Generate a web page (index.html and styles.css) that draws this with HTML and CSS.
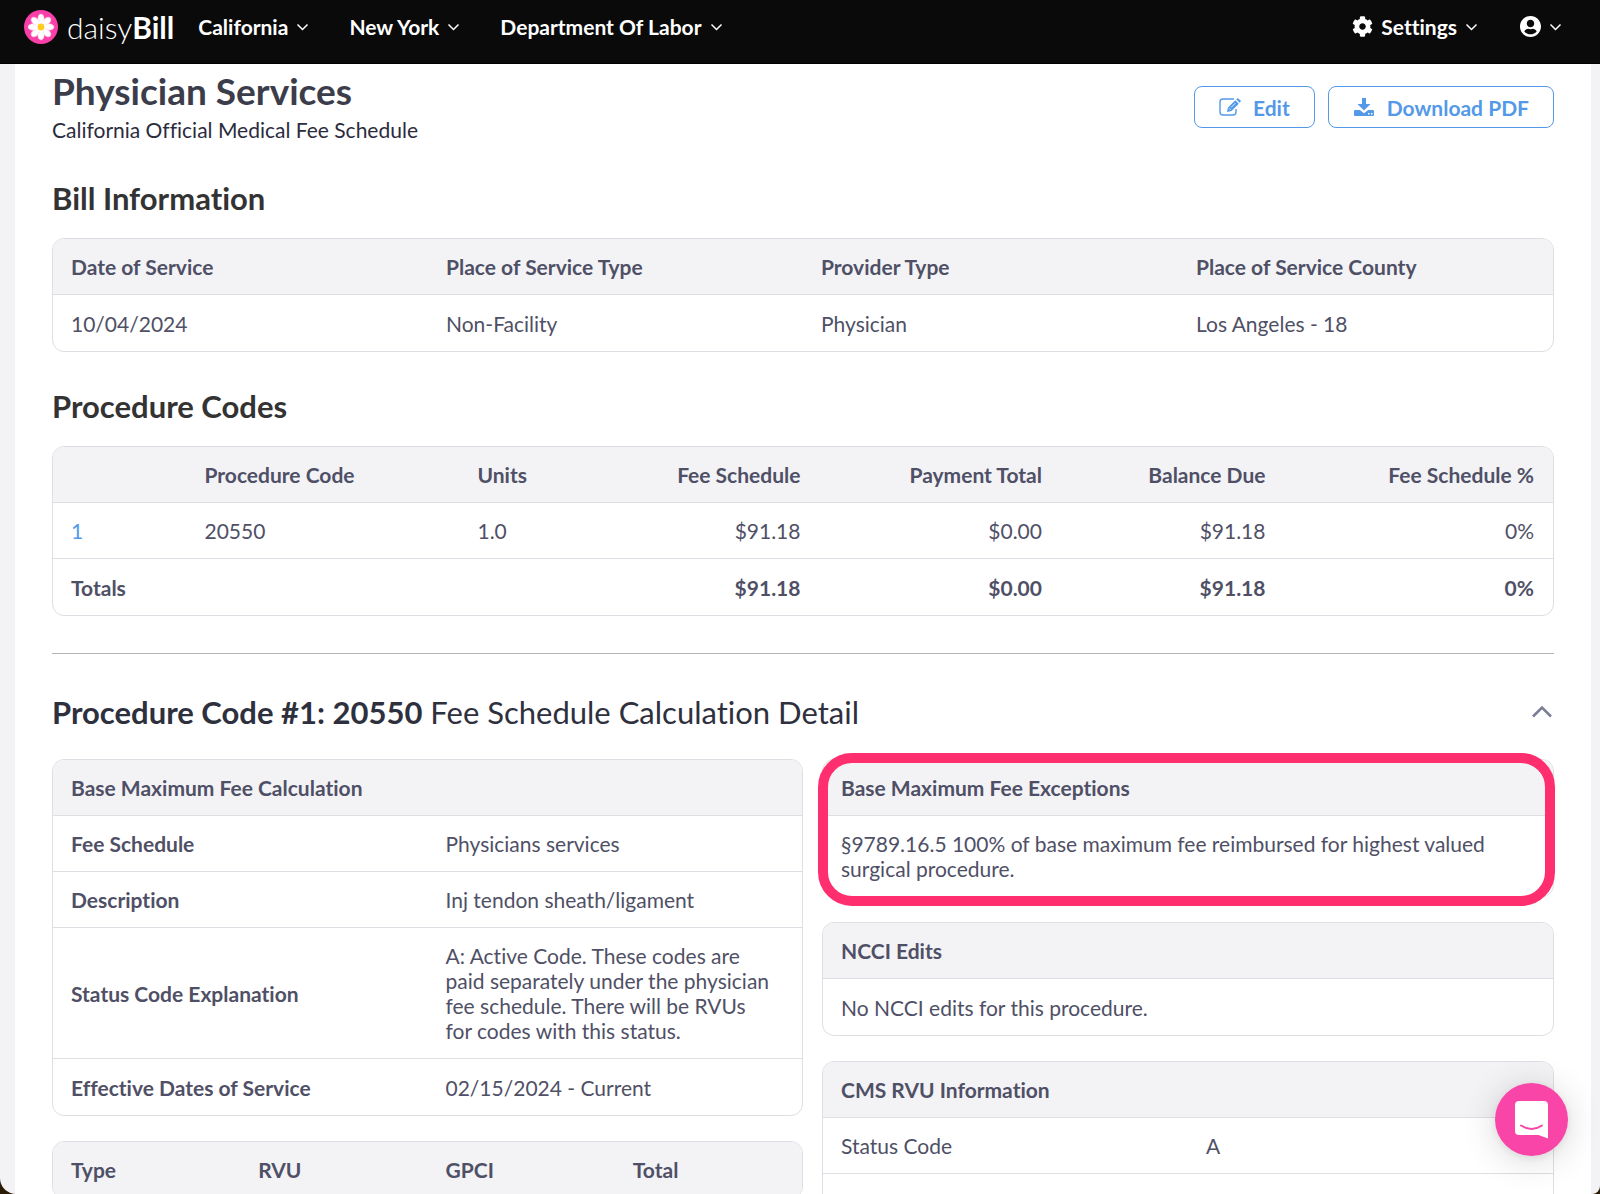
FILE: index.html
```html
<!DOCTYPE html>
<html lang="en">
<head>
    <meta charset="UTF-8">
    <meta name="viewport" content="width=device-width, initial-scale=1.0">
    <title>Physician Services - daisyBill</title>
    <link rel="stylesheet" href="styles.css">
</head>
<body>
    <div class="app">
        <header class="navbar">
            <a class="brand" href="#">
                <svg class="brand-logo" viewBox="0 0 34 34" aria-hidden="true">
                    <circle cx="17" cy="17" r="17" fill="#fb3fa8"/>
                    <g fill="#fff" stroke="#fbc4e2" stroke-width=".5">
                        <ellipse cx="17" cy="9" rx="3.200" ry="5"/>
                        <ellipse cx="17" cy="9" rx="3.200" ry="5" transform="rotate(45 17 17)"/>
                        <ellipse cx="17" cy="9" rx="3.200" ry="5" transform="rotate(90 17 17)"/>
                        <ellipse cx="17" cy="9" rx="3.200" ry="5" transform="rotate(135 17 17)"/>
                        <ellipse cx="17" cy="9" rx="3.200" ry="5" transform="rotate(180 17 17)"/>
                        <ellipse cx="17" cy="9" rx="3.200" ry="5" transform="rotate(225 17 17)"/>
                        <ellipse cx="17" cy="9" rx="3.200" ry="5" transform="rotate(270 17 17)"/>
                        <ellipse cx="17" cy="9" rx="3.200" ry="5" transform="rotate(315 17 17)"/>
                    </g>
                    <circle cx="17" cy="17" r="5" fill="#fff"/>
                    <circle cx="17" cy="17" r="3.400" fill="#ffcb1f"/>
                </svg>
                <span class="brand-name">daisy<b>Bill</b></span>
            </a>
            <nav class="nav-links">
                <button class="nav-item">California <svg class="chevron" viewBox="0 0 12 8"><path d="M1 1.5l5 5 5-5"/></svg></button>
                <button class="nav-item">New York <svg class="chevron" viewBox="0 0 12 8"><path d="M1 1.5l5 5 5-5"/></svg></button>
                <button class="nav-item">Department Of Labor <svg class="chevron" viewBox="0 0 12 8"><path d="M1 1.5l5 5 5-5"/></svg></button>
            </nav>
            <div class="nav-links nav-right">
                <button class="nav-item">
                    <svg class="nav-icon" viewBox="0 0 512 512" fill="#fff" aria-hidden="true"><path d="M487.4 315.7l-42.600-24.600c4.300-23.200 4.300-47 0-70.200l42.600-24.600c4.900-2.800 7.100-8.600 5.500-14-11.100-35.600-30-67.800-54.700-94.600-3.800-4.100-10-5.100-14.800-2.300L380.800 110c-17.900-15.400-38.500-27.300-60.800-35.100V25.800c0-5.600-3.900-10.500-9.400-11.700-36.700-8.200-74.300-7.800-109.200 0-5.500 1.200-9.400 6.100-9.400 11.700V75c-22.200 7.900-42.800 19.800-60.800 35.100L88.700 85.500c-4.900-2.800-11-1.900-14.800 2.300-24.700 26.700-43.600 58.900-54.700 94.600-1.700 5.400.6 11.200 5.500 14L67.300 221c-4.300 23.200-4.300 47 0 70.200l-42.600 24.600c-4.900 2.800-7.100 8.600-5.500 14 11.100 35.600 30 67.800 54.700 94.600 3.800 4.100 10 5.100 14.800 2.300l42.600-24.600c17.900 15.400 38.500 27.300 60.800 35.100v49.200c0 5.600 3.900 10.500 9.400 11.700 36.700 8.200 74.300 7.800 109.200 0 5.500-1.200 9.400-6.100 9.400-11.700v-49.200c22.200-7.900 42.800-19.800 60.800-35.100l42.600 24.600c4.900 2.800 11 1.900 14.800-2.300 24.700-26.700 43.600-58.900 54.700-94.600 1.500-5.500-.7-11.300-5.600-14.100zM256 336c-44.100 0-80-35.900-80-80s35.900-80 80-80 80 35.900 80 80-35.900 80-80 80z"/></svg>
                    Settings <svg class="chevron" viewBox="0 0 12 8"><path d="M1 1.5l5 5 5-5"/></svg>
                </button>
                <button class="nav-item" aria-label="Account">
                    <svg class="nav-icon" viewBox="0 0 496 496" fill="#fff"><path d="M248 0C111 0 0 111 0 248s111 248 248 248 248-111 248-248S385 0 248 0zm0 88c49 0 88 39 88 88s-39 88-88 88-88-39-88-88 39-88 88-88zm0 344c-59 0-111-26-146-68 19-35 56-60 98-60 10 0 24 8 48 8s38-8 48-8c42 0 79 25 98 60-35 42-87 68-146 68z"/></svg>
                    <svg class="chevron" viewBox="0 0 12 8"><path d="M1 1.5l5 5 5-5"/></svg>
                </button>
            </div>
        </header>

        <main class="page">
            <div class="page-header">
                <div>
                    <h1>Physician Services</h1>
                    <p class="subtitle">California Official Medical Fee Schedule</p>
                </div>
                <div class="actions">
                    <button class="btn">
                        <svg class="btn-icon" viewBox="0 0 22 18" aria-hidden="true">
                            <path d="M15 1H4Q1 1 1 4v10q0 3 3 3h10q3 0 3-3v-3" fill="none" stroke="currentColor" stroke-width="1.400"/>
                            <path d="M8 14l1-4.500 7.300-7.300 3.500 3.500L12.500 13zM17.200 1.300l.9-.9q.6-.5 1.200 0l2.200 2.200q.6.600 0 1.200l-.9.900z" fill="currentColor"/>
                            <path d="M10.200 10.400l1.500 1.500M12 9.500l4.300-4.300" stroke="#fff" stroke-width=".8"/>
                        </svg>
                        Edit
                    </button>
                    <button class="btn">
                        <svg class="btn-icon" viewBox="0 0 22 18" aria-hidden="true">
                            <path d="M9 0h4v6h4.500L11 12.500 4.500 6H9z" fill="currentColor"/>
                            <path fill-rule="evenodd" d="M2 12h4.800l4.200 3.200 4.200-3.200H20q1 0 1 1v4q0 1-1 1H2q-1 0-1-1v-4q0-1 1-1zM15 15v1.500h1.500V15zM18 15v1.500h1.500V15z" fill="currentColor"/>
                        </svg>
                        Download PDF
                    </button>
                </div>
            </div>

            <h2>Bill Information</h2>
            <div class="card">
                <table class="even-columns">
                    <thead>
                        <tr>
                            <th>Date of Service</th>
                            <th>Place of Service Type</th>
                            <th>Provider Type</th>
                            <th>Place of Service County</th>
                        </tr>
                    </thead>
                    <tbody>
                        <tr>
                            <td>10/04/2024</td>
                            <td>Non-Facility</td>
                            <td>Physician</td>
                            <td>Los Angeles - 18</td>
                        </tr>
                    </tbody>
                </table>
            </div>

            <h2>Procedure Codes</h2>
            <div class="card">
                <table class="codes-table">
                    <thead>
                        <tr>
                            <th class="col-line"></th>
                            <th class="col-code">Procedure Code</th>
                            <th class="col-units">Units</th>
                            <th class="col-fee num">Fee Schedule</th>
                            <th class="col-payment num">Payment Total</th>
                            <th class="col-balance num">Balance Due</th>
                            <th class="num">Fee Schedule %</th>
                        </tr>
                    </thead>
                    <tbody>
                        <tr>
                            <td><a href="#procedure-1">1</a></td>
                            <td>20550</td>
                            <td>1.0</td>
                            <td class="num">$91.18</td>
                            <td class="num">$0.00</td>
                            <td class="num">$91.18</td>
                            <td class="num">0%</td>
                        </tr>
                        <tr class="totals">
                            <td>Totals</td>
                            <td></td>
                            <td></td>
                            <td class="num">$91.18</td>
                            <td class="num">$0.00</td>
                            <td class="num">$91.18</td>
                            <td class="num">0%</td>
                        </tr>
                    </tbody>
                </table>
            </div>

            <hr>

            <div class="detail-header" id="procedure-1">
                <h2><strong>Procedure Code #1: 20550</strong> Fee Schedule Calculation Detail</h2>
                <button class="collapse" aria-label="Collapse">
                    <svg viewBox="0 0 20 12"><path d="M1 10.500L10 1.500l9 9"/></svg>
                </button>
            </div>

            <div class="detail-columns">
                <div class="column">
                    <div class="card">
                        <table class="even-columns fee-table">
                            <thead>
                                <tr><th colspan="2">Base Maximum Fee Calculation</th></tr>
                            </thead>
                            <tbody>
                                <tr>
                                    <th>Fee Schedule</th>
                                    <td>Physicians services</td>
                                </tr>
                                <tr>
                                    <th>Description</th>
                                    <td>Inj tendon sheath/ligament</td>
                                </tr>
                                <tr>
                                    <th>Status Code Explanation</th>
                                    <td>A: Active Code. These codes are paid separately under the physician fee schedule. There will be RVUs for codes with this status.</td>
                                </tr>
                                <tr>
                                    <th>Effective Dates of Service</th>
                                    <td>02/15/2024 - Current</td>
                                </tr>
                            </tbody>
                        </table>
                    </div>
                    <div class="card">
                        <table class="even-columns">
                            <thead>
                                <tr>
                                    <th>Type</th>
                                    <th>RVU</th>
                                    <th>GPCI</th>
                                    <th>Total</th>
                                </tr>
                            </thead>
                        </table>
                    </div>
                </div>

                <div class="column column-right">
                    <div class="highlight">
                        <div class="card">
                            <table>
                                <thead>
                                    <tr><th>Base Maximum Fee Exceptions</th></tr>
                                </thead>
                                <tbody>
                                    <tr><td>§9789.16.5 100% of base maximum fee reimbursed for highest valued surgical procedure.</td></tr>
                                </tbody>
                            </table>
                        </div>
                    </div>
                    <div class="card">
                        <table>
                            <thead>
                                <tr><th>NCCI Edits</th></tr>
                            </thead>
                            <tbody>
                                <tr><td>No NCCI edits for this procedure.</td></tr>
                            </tbody>
                        </table>
                    </div>
                    <div class="card">
                        <table class="even-columns">
                            <thead>
                                <tr><th colspan="2">CMS RVU Information</th></tr>
                            </thead>
                            <tbody>
                                <tr>
                                    <td>Status Code</td>
                                    <td>A</td>
                                </tr>
                                <tr>
                                    <td></td>
                                    <td></td>
                                </tr>
                            </tbody>
                        </table>
                    </div>
                </div>
            </div>
        </main>

        <button class="chat" aria-label="Open chat">
            <svg viewBox="0 0 33 38">
                <path d="M4 0h25q4 0 4 4v33.500l-9.500-3.500H4q-4 0-4-4V4q0-4 4-4z" fill="#fff"/>
                <path d="M6 24.500q10.500 7 21 0" fill="none" stroke="#f945a7" stroke-width="2" stroke-linecap="round"/>
            </svg>
        </button>
    </div>
</body>
</html>
```
FILE: styles.css
```css
* {
    box-sizing: border-box;
}

html {
    background: #2b1c07;
}

body {
    margin: 0;
    font-family: Lato, "Open Sans", sans-serif;
    font-size: 21px;
    line-height: 25px;
    font-variant-ligatures: no-common-ligatures;
    color: #4f5066;
}

.app {
    height: 100vh;
    overflow: hidden;
    background: #f3f3f6;
    border-radius: 0 0 8px 16px;
}

/* Top bar */
.navbar {
    display: flex;
    align-items: flex-start;
    height: 64px;
    padding: 10px 38px 0 24px;
    background: #0a0a0a;
    border-bottom: 1px solid #000;
}

.brand {
    display: flex;
    align-items: center;
    gap: 9px;
    height: 34px;
    margin-right: 24px;
    color: #fff;
    text-decoration: none;
}

.brand-logo {
    width: 34px;
    height: 34px;
}

.brand-name {
    font-size: 30px;
    font-weight: 300;
    line-height: 32px;
}

.brand-name b {
    font-weight: 700;
}

.nav-links {
    display: flex;
    align-items: center;
    gap: 40px;
    height: 33px;
}

.nav-right {
    gap: 42px;
    margin-left: auto;
}

.nav-item {
    display: flex;
    align-items: center;
    gap: 8px;
    padding: 0;
    border: none;
    background: none;
    color: #fff;
    font: inherit;
    font-weight: 700;
    cursor: pointer;
}

.nav-icon {
    width: 21px;
    height: 21px;
}

.chevron {
    width: 13px;
    height: 8px;
    fill: none;
    stroke: #fff;
    stroke-width: 1.5;
}

/* Page */
.page {
    margin: 0 9px 0 15px;
    padding: 7px 37px 0;
    background: #fff;
}

.page-header {
    display: flex;
    justify-content: space-between;
    align-items: flex-start;
    margin-bottom: 38px;
}

h1 {
    margin: 0;
    font-size: 37px;
    font-weight: 700;
    line-height: 40px;
    color: #3b3d4b;
}

.subtitle {
    margin: 6px 0 0;
    color: #2b2c3d;
}

.actions {
    display: flex;
    gap: 13px;
    margin-top: 15px;
}

.btn {
    display: flex;
    align-items: center;
    gap: 12px;
    height: 42px;
    padding: 0 24px;
    border: 1px solid #5499e8;
    border-radius: 8px;
    background: #fff;
    color: #5499e8;
    font: inherit;
    font-weight: 700;
    cursor: pointer;
}

.btn-icon {
    width: 22px;
    height: 18px;
}

h2 {
    margin: 0 0 22px;
    font-size: 31px;
    font-weight: 700;
    line-height: 36px;
    color: #333;
}

.card {
    border: 1px solid #dedee4;
    border-radius: 12px;
    overflow: hidden;
}

.card + h2 {
    margin-top: 36px;
}

table {
    width: 100%;
    border-collapse: separate;
    border-spacing: 0;
}

th,
td {
    height: 56px;
    padding: 15px 19px 15px 18px;
    border-bottom: 1px solid #dedee4;
    text-align: left;
}

th {
    font-weight: 700;
}

thead th {
    background: #f3f3f6;
}

tbody tr:last-child th,
tbody tr:last-child td {
    border-bottom: none;
}

.even-columns,
.codes-table {
    table-layout: fixed;
}

.fee-table td {
    padding-right: 26px;
}

.col-line { width: 8.9%; }
.col-code { width: 18.2%; }
.col-units { width: 11.9%; }
.col-fee { width: 12.1%; }
.col-payment { width: 16.1%; }
.col-balance { width: 14.9%; }

th.num,
td.num {
    padding-left: 0;
    text-align: right;
}

.totals {
    font-weight: 700;
}

td a {
    color: #5499e8;
    text-decoration: none;
}

hr {
    margin: 37px 0 40px;
    border: none;
    border-top: 1px solid #b4b4b8;
}

.detail-header {
    display: flex;
    justify-content: space-between;
    align-items: center;
    margin-bottom: 29px;
}

.detail-header h2 {
    margin: 0;
    font-weight: 400;
    color: #2e303e;
}

.detail-header strong {
    font-weight: 700;
}

.collapse {
    padding: 0;
    border: none;
    background: none;
    cursor: pointer;
}

.collapse svg {
    display: block;
    width: 20px;
    height: 12px;
    margin-right: 2px;
    fill: none;
    stroke: #7b7d96;
    stroke-width: 2.5;
}

.detail-columns {
    display: grid;
    grid-template-columns: 1fr 1fr;
}

.column {
    display: flex;
    flex-direction: column;
    gap: 25px;
}

.column-right {
    padding-left: 19px;
}

/* Callout drawn around a card */
.highlight {
    position: relative;
}

.highlight::after {
    content: "";
    position: absolute;
    inset: -6px -1px -9px -4px;
    border: 10px solid #ff2e6e;
    border-radius: 34px;
    pointer-events: none;
}

.chat {
    position: fixed;
    right: 32px;
    bottom: 38px;
    display: flex;
    align-items: center;
    justify-content: center;
    width: 73px;
    height: 73px;
    padding: 0;
    border: none;
    border-radius: 50%;
    background: #f945a7;
    box-shadow: 0 2px 8px rgba(0, 0, 0, 0.08), 0 4px 36px rgba(0, 0, 0, 0.16);
    cursor: pointer;
}

.chat svg {
    width: 33px;
    height: 38px;
}
```
